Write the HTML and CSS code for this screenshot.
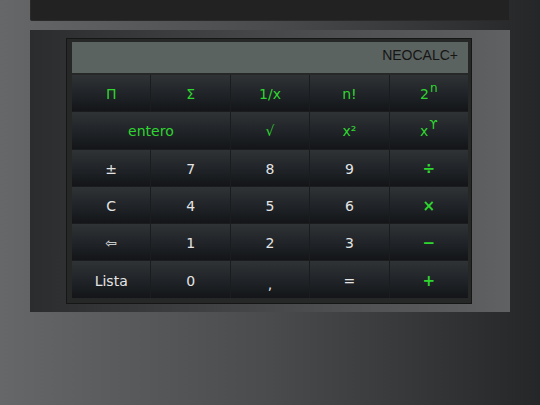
FILE: index.html
```html
<!DOCTYPE html>
<html>
<head>
<meta charset="utf-8">
<link rel="stylesheet" href="styles.css">
</head>
<body>
<div class="topbar"></div>
<div class="panel">
  <div class="calc">
    <div class="display">NEOCALC+</div>
    <div class="keys">
      <div class="key fn">Π</div>
      <div class="key fn">Σ</div>
      <div class="key fn">1/x</div>
      <div class="key fn">n!</div>
      <div class="key fn">2<span class="sup">n</span></div>
      <div class="key fn wide">entero</div>
      <div class="key fn">√</div>
      <div class="key fn">x²</div>
      <div class="key fn">x<span class="sup">ϒ</span></div>
      <div class="key">±</div>
      <div class="key">7</div>
      <div class="key">8</div>
      <div class="key">9</div>
      <div class="key fn op">÷</div>
      <div class="key">C</div>
      <div class="key">4</div>
      <div class="key">5</div>
      <div class="key">6</div>
      <div class="key fn op">×</div>
      <div class="key">⇦</div>
      <div class="key">1</div>
      <div class="key">2</div>
      <div class="key">3</div>
      <div class="key fn op">−</div>
      <div class="key">Lista</div>
      <div class="key">0</div>
      <div class="key comma">,</div>
      <div class="key">=</div>
      <div class="key fn op">+</div>
    </div>
  </div>
</div>
</body>
</html>
```
FILE: styles.css
```css
html, body {
  margin: 0;
  padding: 0;
}
body {
  width: 540px;
  height: 405px;
  background: linear-gradient(to right, #666768 0%, #4a4b4c 50%, #242627 100%);
  font-family: "DejaVu Sans", sans-serif;
  overflow: hidden;
}
.topbar {
  margin: 0 30px;
  height: 20px;
  background: #222222;
  border: 1px solid #2a2a2a;
  border-top: none;
  border-radius: 0 0 2px 2px;
}
.panel {
  margin: 9px 30px 0 30px;
  height: 282px;
  box-sizing: border-box;
  padding: 8px 0 0 36px;
  background: linear-gradient(to right, #2a2c2e 0%, #47484a 50%, #606162 100%);
}
.calc {
  width: 406px;
  height: 266px;
  box-sizing: border-box;
  border: 1px solid #161616;
  background: #262727;
  padding: 3px 3px 0 5px;
  display: flex;
  flex-direction: column;
  gap: 2px;
}
.display {
  height: 31px;
  background: #5b6360;
  color: #161616;
  font-family: "Liberation Sans", Arial, sans-serif;
  font-size: 14px;
  text-align: right;
  padding: 5px 10px 0 0;
  box-sizing: border-box;
}
.keys {
  display: grid;
  grid-template-columns: repeat(5, 1fr);
  grid-auto-rows: 36.3px;
  gap: 1px;
  background: #1a1c1e;
}
.key {
  background: linear-gradient(to bottom, #2f3335 0%, #22262a 45%, #131518 100%);
  color: #e4e4e4;
  font-size: 14px;
  display: flex;
  align-items: center;
  justify-content: center;
  padding-top: 2px;
  box-sizing: border-box;
}
.fn {
  color: #2fd62f;
}
.op {
  font-weight: bold;
  font-size: 15px;
}
.wide {
  grid-column: span 2;
}
.sup {
  font-size: 12px;
  position: relative;
  top: -6px;
  margin-left: 1px;
}
.comma {
  padding-top: 8px;
}
```
